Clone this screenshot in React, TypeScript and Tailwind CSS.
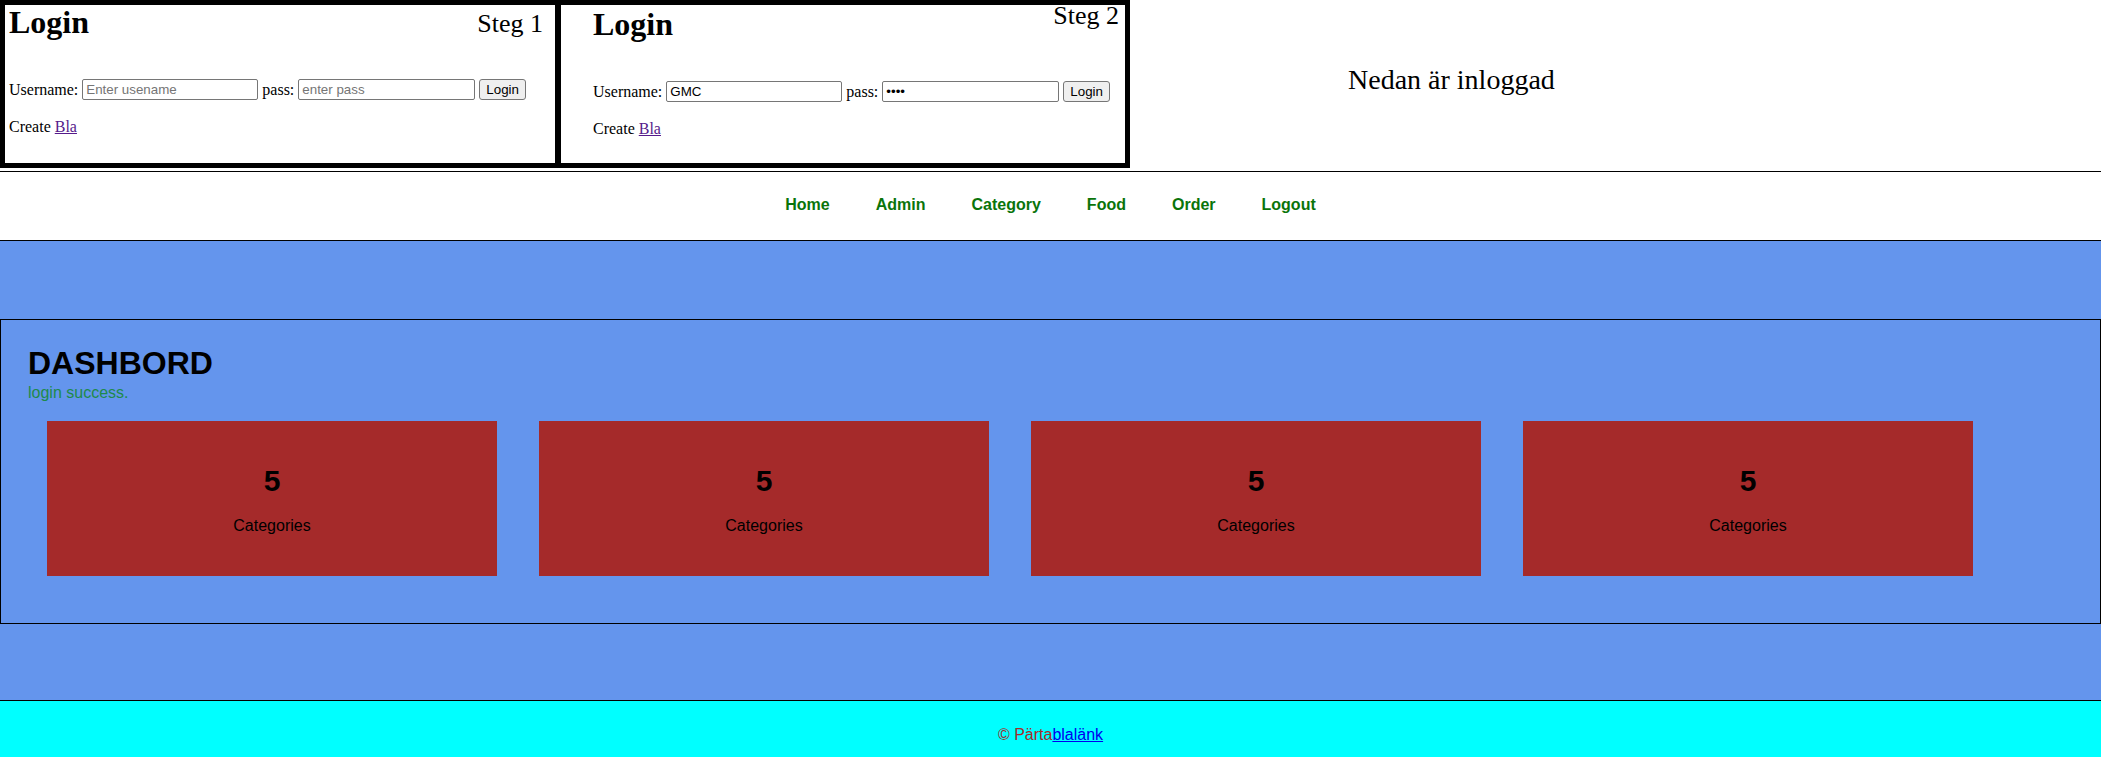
import React from "react";

const serif = { fontFamily: '"Liberation Serif", "Times New Roman", serif' };

function LoginForm({ user, pass, filled }: { user: string; pass: string; filled: boolean }) {
  return (
    <div className="flex items-center text-[16px] leading-[20px] text-black">
      <span>Username:</span>
      <input
        className="ml-[4px] w-[176px] h-[21px] border border-[#767676] rounded-[2px] px-[3px] text-[13.33px] font-['Liberation_Sans',Arial,sans-serif] placeholder:text-[#757575] bg-white outline-none"
        placeholder={filled ? "" : "Enter usename"}
        defaultValue={user}
      />
      <span className="ml-[4px]">pass:</span>
      <input
        type={filled ? "password" : "text"}
        className="ml-[4px] w-[177px] h-[21px] border border-[#767676] rounded-[2px] px-[3px] text-[13.33px] font-['Liberation_Sans',Arial,sans-serif] placeholder:text-[#757575] bg-white outline-none"
        placeholder={filled ? "" : "enter pass"}
        defaultValue={pass}
      />
      <button className="ml-[4px] h-[21px] px-[6px] border border-[#767676] rounded-[3px] bg-[#efefef] text-[13.33px] font-['Liberation_Sans',Arial,sans-serif] text-black">
        Login
      </button>
    </div>
  );
}

function Card() {
  return (
    <div className="w-[450px] h-[155px] bg-[#a52a2a] flex flex-col items-center pt-[42px]">
      <div className="text-[30px] leading-[36px] font-bold text-black">5</div>
      <div className="mt-[17px] text-[16px] leading-[20px] text-black">Categories</div>
    </div>
  );
}

export default function App() {
  const links = ["Home", "Admin", "Category", "Food", "Order", "Logout"];
  return (
    <div className="w-[2101px] bg-white">
      {/* Top row */}
      <div className="flex h-[168px]" style={serif}>
        <div className="w-[558px] h-[168px] border-[5px] border-r-[3px] border-black pl-[4px] pr-[12px]">
          <div className="flex justify-between items-start">
            <h1 className="text-[32px] leading-[32px] font-bold mt-[1px]">Login</h1>
            <div className="text-[26px] leading-[30px] mt-[4px]">Steg 1</div>
          </div>
          <div className="mt-[40px]">
            <LoginForm user="" pass="" filled={false} />
          </div>
          <div className="mt-[17px] text-[16px] leading-[20px]">
            Create <a href="#" className="text-[#551a8b] underline">Bla</a>
          </div>
        </div>
        <div className="w-[572px] h-[168px] border-[5px] border-l-[3px] border-black pl-[32px] pr-[6px]">
          <div className="flex justify-between items-start">
            <h1 className="text-[32px] leading-[32px] font-bold mt-[3px]">Login</h1>
            <div className="text-[26px] leading-[26px] -mt-[2px]">Steg 2</div>
          </div>
          <div className="mt-[41px]">
            <LoginForm user="GMC" pass="••••" filled={true} />
          </div>
          <div className="mt-[17px] text-[16px] leading-[20px]">
            Create <a href="#" className="text-[#551a8b] underline">Bla</a>
          </div>
        </div>
        <div className="flex-1 pl-[218px] pt-[64px]">
          <div className="text-[28px] leading-[32px] text-black">Nedan är inloggad</div>
        </div>
      </div>

      {/* Nav */}
      <nav className="mt-[3px] h-[70px] border-y border-black flex items-center justify-center gap-[46px] pb-[2px] font-['Liberation_Sans',Arial,sans-serif]">
        {links.map((l) => (
          <a key={l} href="#" className="text-[16px] font-bold text-[#0a740a]">
            {l}
          </a>
        ))}
      </nav>

      {/* Main blue */}
      <div className="bg-[#6495ed] h-[459px] pt-[78px] font-['Liberation_Sans',Arial,sans-serif]">
        <div className="h-[305px] border border-black pl-[27px] pt-[25px]">
          <h1 className="text-[32px] leading-[37px] font-bold text-black">DASHBORD</h1>
          <p className="mt-[2px] text-[16px] leading-[18px] text-[#1e8a4a]">login success.</p>
          <div className="mt-[19px] ml-[19px] flex gap-[42px]">
            <Card />
            <Card />
            <Card />
            <Card />
          </div>
        </div>
      </div>

      {/* Footer */}
      <footer className="bg-[#00ffff] h-[70px] border-t border-black pt-[25px] text-center font-['Liberation_Sans',Arial,sans-serif] text-[16px] leading-[18px]">
        <span className="text-[#a52a2a]">© Pärta</span>
        <a href="#" className="text-[#0000ee] underline">blalänk</a>
      </footer>
    </div>
  );
}
